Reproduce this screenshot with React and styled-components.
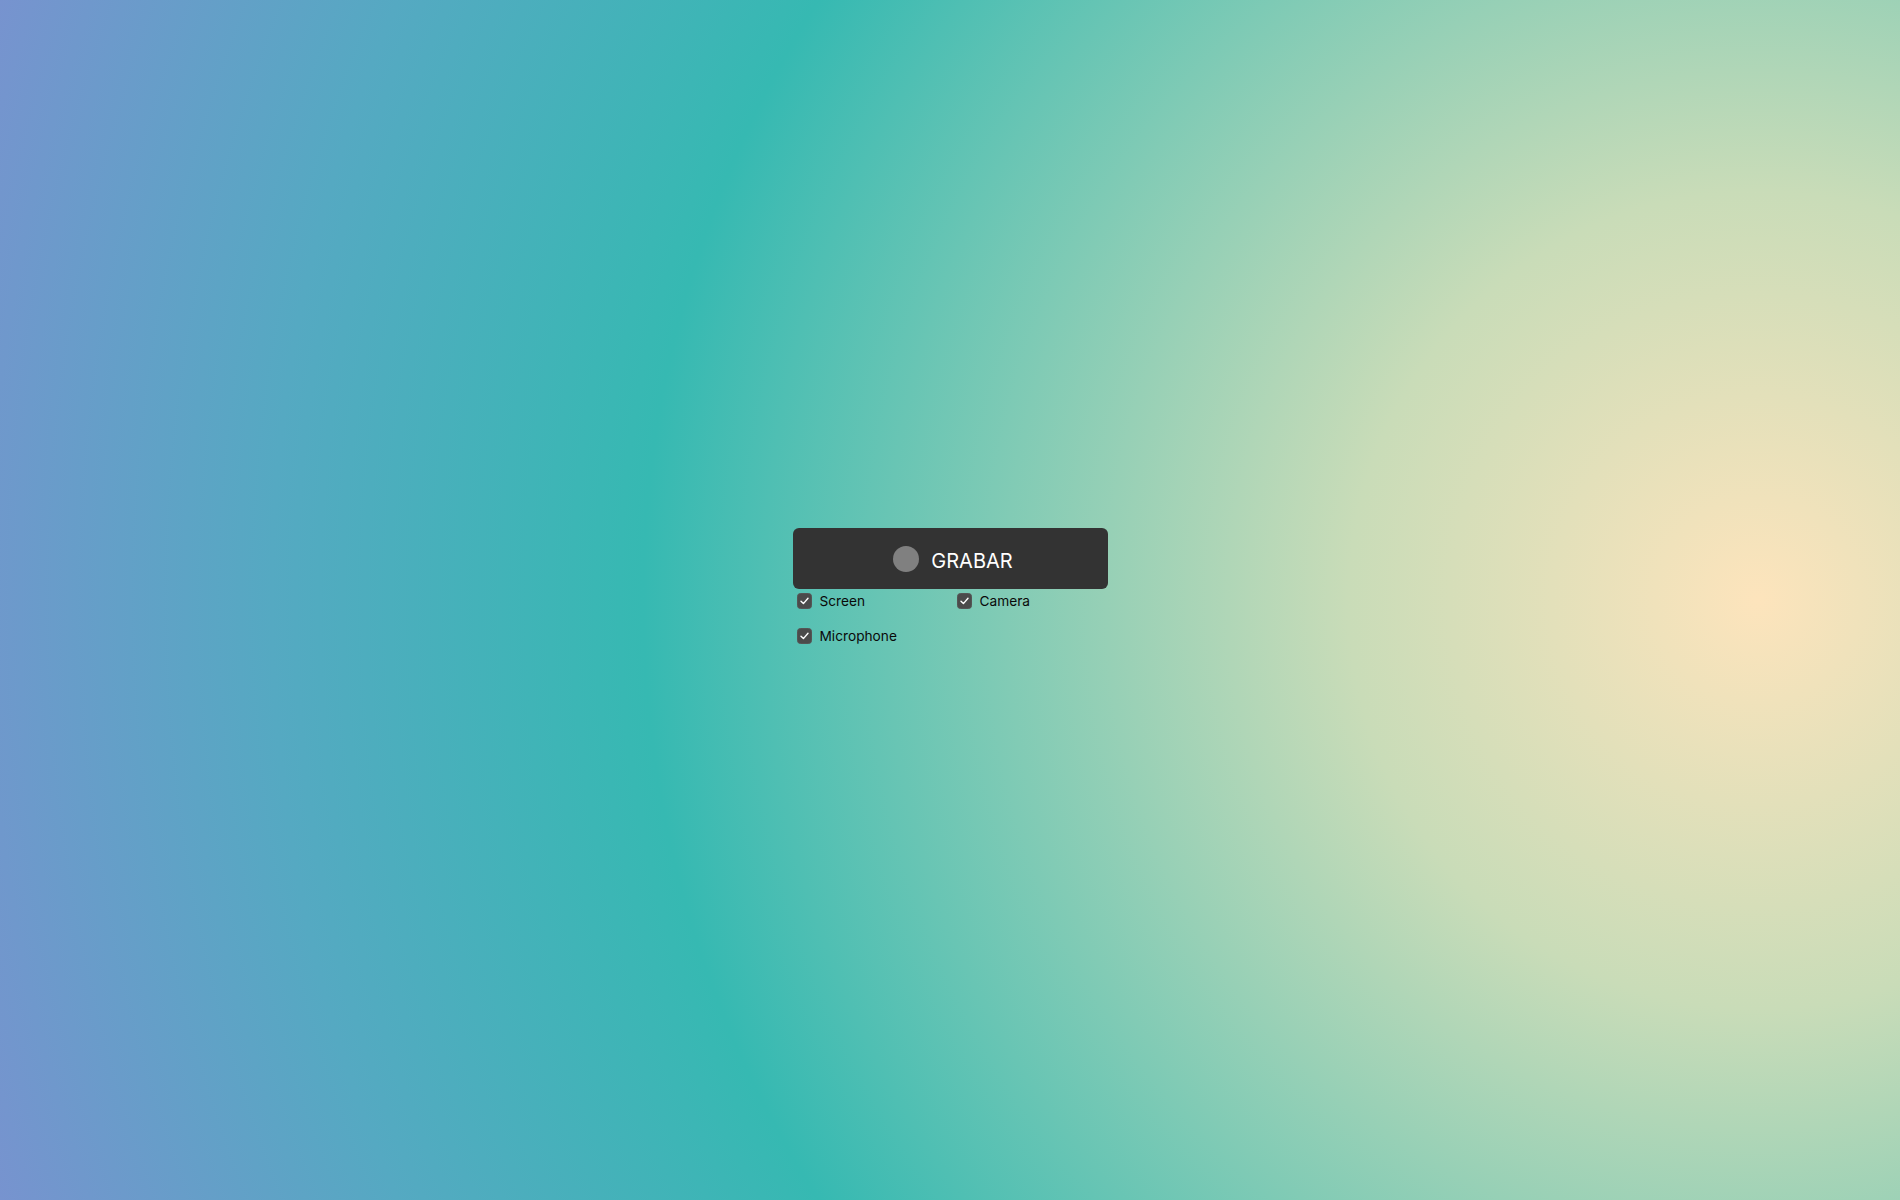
// Core imports
import React, { useState } from "react";
import styled, { createGlobalStyle } from "styled-components";

const GlobalStyle = createGlobalStyle`
  html, body {
    margin: 0;
    padding: 0;
  }
  body {
    font-family: "Inter", "Noto Sans", sans-serif;
  }
`;

const StyledPage = styled.div`
  height: 100vh;
  box-sizing: border-box;
  overflow: hidden;
  padding-top: 528px;
  display: flex;
  justify-content: center;
  align-items: flex-start;
  background: radial-gradient(
    circle at 92.5% 50%,
    #fde4bc 0%,
    #c9dcb8 22%,
    #36b9b2 60%,
    #55a9c2 80%,
    #7793cf 100%
  );
`;

const StyledRecorder = styled.div`
  width: 315px;
  display: flex;
  flex-direction: column;
`;

const StyledRecordButton = styled.button`
  height: 61px;
  border: none;
  border-radius: 6px;
  background: #333333;
  color: #ffffff;
  display: flex;
  align-items: center;
  justify-content: center;
  gap: 12px;
  padding: 0 0 0 6px;
  cursor: pointer;

  font-family: "Inter", "Noto Sans", sans-serif;
  font-size: 20px;
  font-weight: 400;
  letter-spacing: 0;
`;

const StyledDot = styled.span`
  width: 26px;
  height: 26px;
  border-radius: 50%;
  background: ${(props) => (props.$recording ? "#e5484d" : "#808080")};
`;

const StyledLabelText = styled.span`
  padding-top: 5px;
`;

const StyledOptions = styled.div`
  display: grid;
  grid-template-columns: 1fr 1fr;
  column-gap: 5px;
  row-gap: 13px;
  margin-top: 1px;
`;

const StyledOption = styled.label`
  display: flex;
  align-items: center;
  gap: 8px;
  height: 22px;
  padding-left: 4px;
  cursor: pointer;

  font-family: "Inter", "Noto Sans", sans-serif;
  font-size: 13.7px;
  color: #0a0a0a;

  & input {
    display: none;
  }
`;

const StyledBox = styled.span`
  width: 15px;
  height: 16px;
  box-sizing: border-box;
  border-radius: 3.5px;
  background: ${(props) => (props.$checked ? "#4b4b4b" : "#ffffff")};
  border: 1px solid #555555;
  display: flex;
  align-items: center;
  justify-content: center;
`;

const OPTIONS = ["Screen", "Camera", "Microphone"];

const App = () => {
  const [checked, setChecked] = useState(OPTIONS.map(() => true));
  const [recording, setRecording] = useState(false);

  const toggle = (position) => {
    setChecked(checked.map((itm, index) => (index === position ? !itm : itm)));
  };

  return (
    <StyledPage>
      <GlobalStyle />
      <StyledRecorder>
        <StyledRecordButton onClick={() => setRecording(!recording)}>
          <StyledDot $recording={recording} />
          <StyledLabelText>GRABAR</StyledLabelText>
        </StyledRecordButton>
        <StyledOptions>
          {OPTIONS.map((name, index) => (
            <StyledOption key={name}>
              <input
                type="checkbox"
                checked={checked[index]}
                onChange={() => toggle(index)}
              />
              <StyledBox $checked={checked[index]}>
                {checked[index] && (
                  <svg width="9" height="8" viewBox="0 0 9 8">
                    <path
                      d="M1 4.3 L3.4 6.6 L8 1.2"
                      fill="none"
                      stroke="#ffffff"
                      strokeWidth="1.4"
                      strokeLinecap="round"
                      strokeLinejoin="round"
                    />
                  </svg>
                )}
              </StyledBox>
              {name}
            </StyledOption>
          ))}
        </StyledOptions>
      </StyledRecorder>
    </StyledPage>
  );
};

export default App;
